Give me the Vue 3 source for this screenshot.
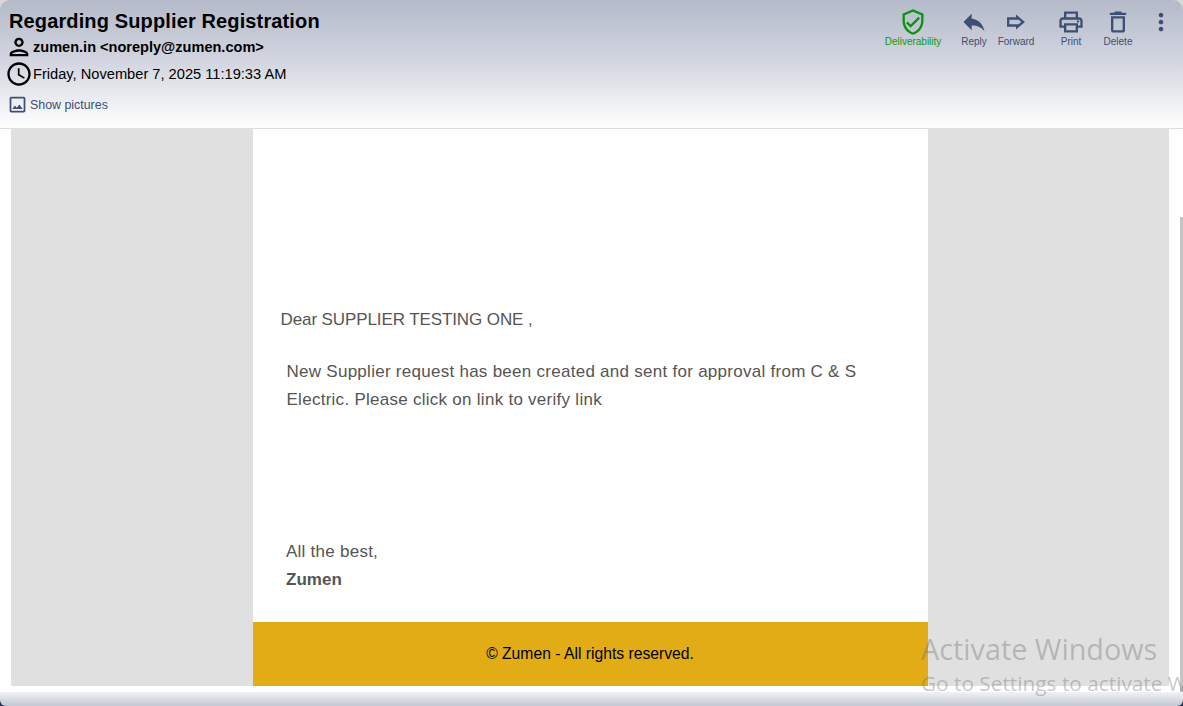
<template>
  <div class="window">
    <header class="mail-header">
      <div class="meta">
        <h1 class="subject">{{ subject }}</h1>
        <div class="meta-row sender">
          <svg class="meta-icon person" viewBox="0 0 24 24"><path :d="icons.person" /></svg>
          <span>{{ sender }}</span>
        </div>
        <div class="meta-row date">
          <svg class="meta-icon clock" viewBox="0 0 24 24"><path :d="icons.clock" /></svg>
          <span>{{ date }}</span>
        </div>
        <div class="show-pictures">
          <svg viewBox="0 0 24 24"><path :d="icons.image" /></svg>
          <span>Show pictures</span>
        </div>
      </div>

      <div class="toolbar">
        <div v-for="action in actions" :key="action.label" class="action" :class="action.cls">
          <svg viewBox="0 0 24 24">
            <path :d="action.icon" fill-rule="evenodd" />
            <circle v-if="action.label === 'Print'" cx="18" cy="11.5" r="1" />
          </svg>
          <span>{{ action.label }}</span>
        </div>
        <div class="more">
          <svg viewBox="0 0 24 24"><path :d="icons.dots" /></svg>
        </div>
      </div>
    </header>

    <main class="mail-body">
      <div class="backdrop">
        <article class="sheet">
          <div class="content">
            <p class="greeting">Dear SUPPLIER TESTING ONE ,</p>
            <p class="message">New Supplier request has been created and sent for approval from C &amp; S Electric. Please click on link to verify link</p>
            <p class="signoff">All the best,<br /><strong>Zumen</strong></p>
          </div>
          <footer class="sheet-footer">© Zumen - All rights reserved.</footer>
        </article>
      </div>
    </main>

    <div class="bottom-bar"><div class="bottom-fill"></div></div>
    <div class="scroll-thumb"></div>

    <div class="watermark">
      <div class="wm-title">Activate Windows</div>
      <div class="wm-sub">Go to Settings to activate Windows.</div>
    </div>
  </div>
</template>

<script setup>
const subject = "Regarding Supplier Registration";
const sender = "zumen.in <noreply@zumen.com>";
const date = "Friday, November 7, 2025 11:19:33 AM";

const icons = {
  person: "M12 6c1.1 0 2 .9 2 2s-.9 2-2 2-2-.9-2-2 .9-2 2-2m0 10c2.7 0 5.8 1.29 6 2H6c.23-.72 3.31-2 6-2m0-12C9.79 4 8 5.79 8 8s1.79 4 4 4 4-1.79 4-4-1.79-4-4-4zm0 10c-2.67 0-8 1.34-8 4v2h16v-2c0-2.66-5.33-4-8-4z",
  clock: "M11.99 2C6.47 2 2 6.48 2 12s4.47 10 9.99 10C17.52 22 22 17.52 22 12S17.52 2 11.99 2zM12 20c-4.42 0-8-3.58-8-8s3.58-8 8-8 8 3.58 8 8-3.58 8-8 8zm.5-13H11v6l5.25 3.15.75-1.23-4.5-2.67z",
  image: "M19 5v14H5V5h14m0-2H5c-1.1 0-2 .9-2 2v14c0 1.1.9 2 2 2h14c1.1 0 2-.9 2-2V5c0-1.1-.9-2-2-2zm-4.86 8.86l-3 3.87L9 13.14 6 17h12l-3.86-5.14z",
  dots: "M12 8c1.1 0 2-.9 2-2s-.9-2-2-2-2 .9-2 2 .9 2 2 2zm0 2c-1.1 0-2 .9-2 2s.9 2 2 2 2-.9 2-2-.9-2-2-2zm0 6c-1.1 0-2 .9-2 2s.9 2 2 2 2-.9 2-2-.9-2-2-2z",
};

// Icons of the toolbar, left to right
const actions = [
  {
    label: "Deliverability",
    cls: "deliverability",
    icon: "M21 11c0 5.55-3.84 10.74-9 12-5.16-1.26-9-6.45-9-12V5l9-4 9 4v6zm-9 10c3.75-1 7-5.46 7-9.78V6.3l-7-3.12L5 6.3v4.92C5 15.54 8.25 20 12 21zm-2-4l-4-4 1.41-1.41L10 14.17l6.59-6.59L18 9l-8 8z",
  },
  { label: "Reply", cls: "reply", icon: "M10 9V5l-7 7 7 7v-4.1c5 0 8.5 1.6 11 5.1-1-5-4-10-11-11z" },
  {
    label: "Forward",
    cls: "forward",
    icon: "M12 5.5L19.7 12 12 18.5V16H4.3V8H12V5.5zM14 9.8V10H6.3v4H14v.2L16.6 12 14 9.8z",
  },
  {
    label: "Print",
    cls: "print",
    icon: "M19 8h-1V3H6v5H5c-1.66 0-3 1.34-3 3v6h4v4h12v-4h4v-6c0-1.66-1.34-3-3-3zM8 5h8v3H8V5zm8 10v4H8v-4h8zm2 0v-2H6v2H4v-4c0-.55.45-1 1-1h14c.55 0 1 .45 1 1v4h-2z",
  },
  {
    label: "Delete",
    cls: "delete",
    icon: "M6 19c0 1.1.9 2 2 2h8c1.1 0 2-.9 2-2V7H6v12zM8 9h8v10H8V9zm7.5-5l-1-1h-5l-1 1H5v2h14V4z",
  },
];
</script>

<style>
html,
body {
  margin: 0;
  background: #fff;
}
</style>

<style scoped>
.window {
  position: relative;
  width: 1183px;
  height: 706px;
  overflow: hidden;
  display: flex;
  flex-direction: column;
  background: #d8d8d8;
  font-family: "Liberation Sans", Arial, sans-serif;
}

/* Header */
.mail-header {
  height: 128px;
  flex: none;
  display: flex;
  justify-content: space-between;
  border-bottom: 1px solid #dedede;
  border-radius: 10px 10px 0 0;
  background: linear-gradient(180deg, #b4bac9 0%, #d4d7e1 50%, #ffffff 100%);
}

.meta {
  padding: 9px 0 0 9px;
  color: #000;
}

.subject {
  margin: 0;
  font-size: 20px;
  line-height: 25px;
  font-weight: 700;
  letter-spacing: 0.13px;
}

.meta-row {
  display: flex;
  align-items: center;
}

.meta-row svg {
  fill: #000;
  flex: none;
}

.sender {
  height: 24px;
  margin-top: 1px;
  margin-left: -4px;
  font-size: 14.55px;
  font-weight: 700;
}

.person {
  width: 28px;
  height: 28px;
}

.date {
  height: 26px;
  margin-top: 2px;
  margin-left: -4px;
  font-size: 14.65px;
}

.clock {
  width: 28px;
  height: 28px;
}

.show-pictures {
  display: flex;
  align-items: center;
  gap: 2px;
  margin-top: 7px;
  margin-left: -2px;
  font-size: 12.4px;
  color: #3d4f74;
}

.show-pictures svg {
  width: 21px;
  height: 21px;
  fill: #3d4f74;
}

/* Toolbar */
.toolbar {
  display: flex;
  align-items: flex-start;
  padding: 8px 10px 0 0;
}

.action {
  display: flex;
  flex-direction: column;
  align-items: center;
  font-size: 10px;
  color: #3d4f74;
}

.action svg {
  width: 28px;
  height: 28px;
  fill: #3d4f74;
}

.action span {
  margin-top: 0;
  line-height: 12px;
  white-space: nowrap;
}

.deliverability {
  width: 58px;
  color: #0f9a12;
}

.deliverability svg {
  fill: #0a930d;
}

.reply {
  width: 40px;
  margin-left: 12px;
}

.forward {
  width: 44px;
}

.print {
  width: 44px;
  margin-left: 11px;
}

.delete {
  width: 44px;
  margin-left: 3px;
}

.more {
  width: 24px;
  margin-left: 9px;
  display: flex;
  justify-content: center;
}

.more svg {
  flex: none;
  width: 28px;
  height: 28px;
  fill: #3d4f74;
}

/* Message body */
.mail-body {
  flex: none;
  padding: 0 14px 6px 11px;
  background: #fff;
}

.backdrop {
  height: 557px;
  display: flex;
  justify-content: center;
  background: #e0e0e0;
}

.sheet {
  width: 675px;
  display: flex;
  flex-direction: column;
  background: #fff;
}

.content {
  flex: 1;
  padding: 177px 34px 0 28px;
  font-size: 17px;
  line-height: 28px;
  color: #555;
}

.content p {
  margin: 0;
}

.greeting {
  letter-spacing: -0.1px;
}

.content .message {
  padding-left: 6px;
  margin-top: 24px;
  letter-spacing: 0.27px;
}

.content .signoff {
  padding-left: 5.5px;
  margin-top: 124px;
  letter-spacing: 0.25px;
}

.signoff strong {
  letter-spacing: 0.05px;
}

.sheet-footer {
  height: 64px;
  display: flex;
  align-items: center;
  justify-content: center;
  background: #e1ac16;
  color: #000;
  font-size: 15.7px;
}

.bottom-bar {
  flex: 1;
  background: #2b3553;
}

.bottom-fill {
  height: 100%;
  border-radius: 0 0 6px 6px;
  background: linear-gradient(180deg, #f1f2f5 0%, #c4c8d3 100%);
}

.scroll-thumb {
  position: absolute;
  right: 0;
  top: 217px;
  bottom: 14px;
  width: 3px;
  background: #c4c4c4;
}

/* Overlay of the OS */
.watermark {
  position: absolute;
  left: 921px;
  top: 629px;
  white-space: nowrap;
  font-family: "Open Sans", sans-serif;
  color: rgba(110, 110, 110, 0.38);
  pointer-events: none;
}

.wm-title {
  font-size: 28.8px;
  line-height: 39px;
}

.wm-sub {
  font-size: 20.8px;
  line-height: 31px;
}
</style>
